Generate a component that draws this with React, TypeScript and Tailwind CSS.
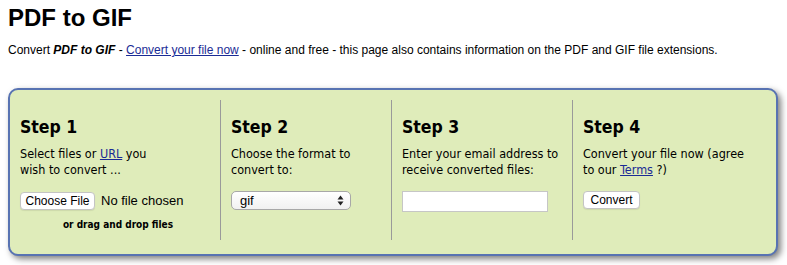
/**
 * PDF to GIF converter page — four-step conversion panel.
 */

const stepFont = { fontFamily: '"DejaVu Sans Condensed", "DejaVu Sans", Verdana, sans-serif' }

function StepHeading({ children }: { children: React.ReactNode }): JSX.Element {
  return <h2 className="pt-[17px] text-[17.5px] font-bold leading-[20px] text-black">{children}</h2>
}

function StepText({ children }: { children: React.ReactNode }): JSX.Element {
  return <p className="mt-[9px] text-[12.5px] leading-[16px] text-black">{children}</p>
}

function SelectArrows(): JSX.Element {
  return (
    <svg width="7" height="11" viewBox="0 0 7 11" aria-hidden="true">
      <path d="M3.5 0.5 L6.5 4.5 L0.5 4.5 Z" fill="#222" />
      <path d="M3.5 10.5 L6.5 6.5 L0.5 6.5 Z" fill="#222" />
    </svg>
  )
}

export default function App(): JSX.Element {
  return (
    <div className="min-h-[265px] w-[787px] bg-white" style={{ fontFamily: '"Liberation Sans", Arial, sans-serif' }}>
      <div className="px-[8px]">
        <h1 className="pt-[4px] text-[24px] font-bold leading-[28px] text-black">PDF to GIF</h1>
        <p className="mt-[11px] text-[12px] leading-[14px] text-black">
          Convert <b><i>PDF to GIF</i></b> -{' '}
          <a href="#" className="text-[#1a2b95] underline">
            Convert your file now
          </a>{' '}
          - online and free - this page also contains information on the PDF and GIF file extensions.
        </p>

        {/* Steps panel */}
        <div
          className="mt-[31px] flex w-[770px] rounded-[10px] border-2 border-[#5873b2] bg-[#dfecba] pb-[14px] pt-[10px] shadow-[3px_3px_6px_rgba(0,0,0,0.5)]"
          style={stepFont}
        >
          {/* Step 1 */}
          <div className="h-[140px] w-[210px] pl-[10px]">
            <StepHeading>Step 1</StepHeading>
            <StepText>
              Select files or{' '}
              <a href="#" className="text-[#1a2b95] underline">
                URL
              </a>{' '}
              you
              <br />
              wish to convert ...
            </StepText>
            <div className="mt-[13px] flex items-center" style={{ fontFamily: '"Liberation Sans", Arial, sans-serif' }}>
              <button className="h-[18px] w-[75px] rounded-[4px] border border-[#c4c4c4] bg-white text-[12px] leading-[16px] text-black shadow-[0_1px_1px_rgba(0,0,0,0.08)]">
                Choose File
              </button>
              <span className="ml-[6px] text-[13px] text-black">No file chosen</span>
            </div>
            <p className="mt-[7px] w-[196px] text-center text-[10px] font-bold leading-[14px] text-black">
              or drag and drop files
            </p>
          </div>

          {/* Step 2 */}
          <div className="h-[140px] w-[171px] border-l border-[#9a9a9a] pl-[10px]">
            <StepHeading>Step 2</StepHeading>
            <StepText>
              Choose the format to
              <br />
              convert to:
            </StepText>
            <div
              className="mt-[13px] flex h-[19px] w-[120px] items-center justify-between rounded-[5px] border border-[#a8a8a8] bg-gradient-to-b from-white to-[#f1f1f1] pl-[8px] pr-[6px]"
              style={{ fontFamily: '"Liberation Sans", Arial, sans-serif' }}
            >
              <span className="text-[13px] leading-[17px] text-black">gif</span>
              <SelectArrows />
            </div>
          </div>

          {/* Step 3 */}
          <div className="h-[140px] w-[181px] border-l border-[#9a9a9a] pl-[10px]">
            <StepHeading>Step 3</StepHeading>
            <StepText>
              Enter your email address to
              <br />
              receive converted files:
            </StepText>
            <input
              type="email"
              className="mt-[13px] block h-[21px] w-[146px] border border-[#c6c6c6] bg-white outline-none"
            />
          </div>

          {/* Step 4 */}
          <div className="h-[140px] flex-1 border-l border-[#9a9a9a] pl-[10px]">
            <StepHeading>Step 4</StepHeading>
            <StepText>
              Convert your file now (agree
              <br />
              to our{' '}
              <a href="#" className="text-[#1a2b95] underline">
                Terms
              </a>{' '}
              ?)
            </StepText>
            <button
              className="mt-[13px] h-[18px] w-[57px] rounded-[4px] border border-[#c4c4c4] bg-white text-[12px] leading-[16px] text-black shadow-[0_1px_1px_rgba(0,0,0,0.08)]"
              style={{ fontFamily: '"Liberation Sans", Arial, sans-serif' }}
            >
              Convert
            </button>
          </div>
        </div>
      </div>
    </div>
  )
}
